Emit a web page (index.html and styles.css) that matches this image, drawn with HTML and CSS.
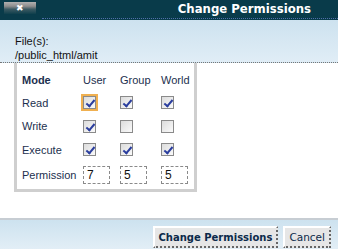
FILE: index.html
```html
<!DOCTYPE html>
<html lang="en">
  <head>
    <meta charset="UTF-8" />
    <title>Change Permissions</title>
    <link rel="stylesheet" href="styles.css">
  </head>
  <body>
    <div class="dialog">
      <!-- Header -->
      <div class="header">
        <div class="header-row">
          <span class="close">&#x2716;</span>
          <span class="title">Change Permissions</span>
        </div>
        <div class="header-rule"></div>
      </div>

      <!-- Files -->
      <div class="files">
        <p>File(s):</p>
        <p>/public_html/amit</p>
      </div>

      <!-- Permissions table -->
      <div class="content">
        <div class="perm-box">
          <table class="perm">
            <tr>
              <th>Mode</th>
              <td>User</td>
              <td>Group</td>
              <td>World</td>
            </tr>
            <tr>
              <td class="label">Read</td>
              <td><span class="check on focus"></span></td>
              <td><span class="check on"></span></td>
              <td><span class="check on"></span></td>
            </tr>
            <tr>
              <td class="label">Write</td>
              <td><span class="check on"></span></td>
              <td><span class="check"></span></td>
              <td><span class="check"></span></td>
            </tr>
            <tr>
              <td class="label">Execute</td>
              <td><span class="check on"></span></td>
              <td><span class="check on"></span></td>
              <td><span class="check on"></span></td>
            </tr>
            <tr>
              <td class="label">Permission</td>
              <td><span class="num">7</span></td>
              <td><span class="num">5</span></td>
              <td><span class="num">5</span></td>
            </tr>
          </table>
        </div>
      </div>

      <!-- Footer -->
      <div class="footer">
        <button class="btn primary">Change Permissions</button>
        <button class="btn">Cancel</button>
      </div>
    </div>
  </body>
</html>
```
FILE: styles.css
```css
* {
  margin: 0;
  padding: 0;
  box-sizing: border-box;
}

body {
  width: 338px;
  height: 249px;
  background: #fff;
  font-family: 'Liberation Sans', Arial, sans-serif;
  font-size: 11px;
  color: #1c2f4e;
}

.dialog {
  display: flex;
  flex-direction: column;
  height: 249px;
}

/* Header */
.header {
  background: #093b4a;
  height: 20px;
  display: flex;
  flex-direction: column;
}

.header-row {
  display: flex;
  justify-content: space-between;
  align-items: flex-start;
  height: 18px;
}

.close {
  margin: 2px 0 0 4px;
  width: 32px;
  height: 12px;
  background: linear-gradient(to bottom, #b0b0b0, #8e8e8e 35%, #3c5a63 60%, #0f3f4c);
  color: #fff;
  font-size: 9px;
  line-height: 13px;
  text-align: center;
}

.title {
  font-family: 'DejaVu Sans Condensed', 'DejaVu Sans', Verdana, sans-serif;
  font-weight: bold;
  font-size: 13px;
  color: #fff;
  line-height: 18px;
  padding-right: 27px;
}

.header-rule {
  margin-left: 42px;
  border-top: 1px dotted #4f6ea8;
}

/* Files */
.files {
  background: linear-gradient(to bottom, #cde2ef, #e0edf6);
  height: 43px;
  padding: 15px 0 0 15px;
  border-bottom: 1px dotted #777;
  line-height: 13px;
  color: #111;
}

.files p:first-child {
  margin-bottom: 1px;
}

/* Content */
.content {
  flex: 1;
  padding-left: 14px;
}

.perm-box {
  width: 183px;
  border: 3px solid #cfcfcf;
  border-top: none;
  padding: 11px 0 1px 5px;
}

.perm {
  border-collapse: collapse;
}

.perm th,
.perm td {
  text-align: left;
  padding: 0;
  height: 23.5px;
  vertical-align: middle;
}

.perm tr:first-child th,
.perm tr:first-child td {
  height: 17px;
  vertical-align: top;
}

.perm tr:last-child td {
  height: 26px;
}

.perm th {
  font-weight: bold;
  width: 61px;
}

.perm td:nth-child(2) {
  width: 37px;
}

.perm td:nth-child(3) {
  width: 41px;
}

.check {
  display: block;
  width: 13px;
  height: 13px;
  border: 1px solid #8a8a8a;
  background: linear-gradient(to bottom right, #dcdcdc, #fafafa);
  position: relative;
}

.check.on::after {
  content: '';
  position: absolute;
  left: 4px;
  top: 1px;
  width: 3px;
  height: 7px;
  border: solid #2b3e9e;
  border-width: 0 2px 2px 0;
  transform: rotate(40deg);
}

.check.focus {
  outline: 2px solid #f0b050;
}

.num {
  display: block;
  width: 27px;
  height: 18px;
  border: 1px dashed #8a8a8a;
  padding: 1px 3px;
  font-size: 12px;
  line-height: 15px;
  color: #111;
}

/* Footer */
.footer {
  height: 31px;
  border-top: 2px solid #c7cdd3;
  background: linear-gradient(to bottom, #cde2ef, #e2eef6);
  display: flex;
  justify-content: flex-end;
  align-items: flex-end;
  gap: 5px;
  padding-right: 7px;
  padding-bottom: 1px;
}

.btn {
  font-family: 'DejaVu Sans', Verdana, sans-serif;
  font-size: 10.5px;
  color: #0c2a4a;
  background: #e6e6e6;
  border: 2px solid #fff;
  border-right: 2px dotted #666;
  border-bottom: 2px dotted #666;
  height: 22px;
  padding: 0 4px;
}

.btn.primary {
  font-weight: bold;
  font-size: 10px;
}
```
